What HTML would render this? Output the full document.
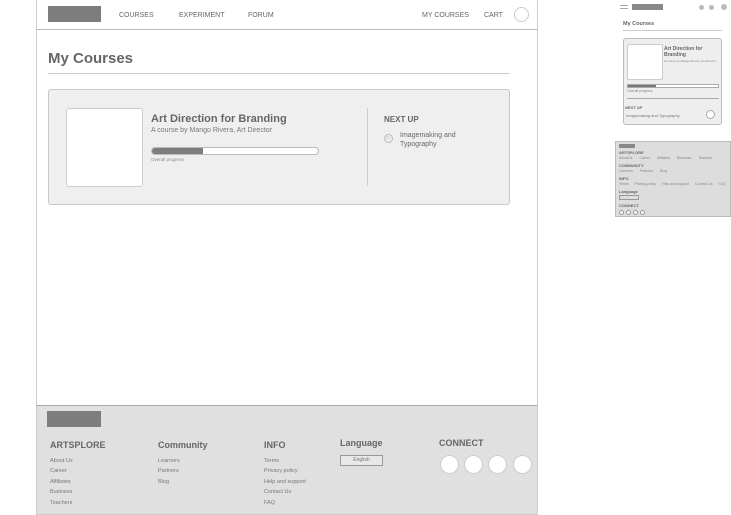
<!DOCTYPE html>
<html><head><style>
*{margin:0;padding:0;box-sizing:border-box}
body{width:731px;height:515px;background:#fff;position:relative;overflow:hidden;font-family:"Liberation Sans",sans-serif;color:#666}
.a{position:absolute;white-space:nowrap}
.nav{font-size:7px;color:#666;top:12px}
.fh{font-size:9px;font-weight:bold;color:#666}
.fl{font-size:5.5px;color:#777}
.c{position:absolute;width:19px;height:19px;border-radius:50%;background:#fff;border:1px solid #ccc;top:455px}
.t{font-size:3.5px;color:#888}
.mh{font-size:4px;font-weight:bold;color:#666}
</style></head><body>
<div class="a" style="left:36px;top:0;width:502px;height:515px;border:1px solid #ccc;border-top:none"></div>
<div class="a" style="left:36px;top:29px;width:502px;height:1px;background:#bbb"></div>
<div class="a" style="left:48px;top:6px;width:53px;height:16px;background:#7d7d7d"></div>
<div class="a nav" style="left:119px">COURSES</div>
<div class="a nav" style="left:179px">EXPERIMENT</div>
<div class="a nav" style="left:248px">FORUM</div>
<div class="a nav" style="left:422px">MY COURSES</div>
<div class="a nav" style="left:484px">CART</div>
<div class="a" style="left:514px;top:7px;width:15px;height:15px;border-radius:50%;border:1px solid #ccc"></div>
<div class="a" style="left:48px;top:50px;font-size:15px;font-weight:bold;color:#666">My Courses</div>
<div class="a" style="left:48px;top:73px;width:462px;height:1px;background:#ccc"></div>
<div class="a" style="left:48px;top:89px;width:462px;height:116px;background:#efefef;border:1px solid #c8c8c8;border-radius:3px"></div>
<div class="a" style="left:66px;top:108px;width:77px;height:79px;background:#fff;border:1px solid #ccc;border-radius:3px"></div>
<div class="a" style="left:151px;top:113px;font-size:11px;font-weight:bold;color:#666">Art Direction for Branding</div>
<div class="a" style="left:151px;top:127px;font-size:7px;color:#777">A course by Mango Rivera, Art Director</div>
<div class="a" style="left:151px;top:147px;width:168px;height:8px;background:#fff;border:1px solid #bbb;border-radius:4px;overflow:hidden"><div style="width:51px;height:100%;background:#7d7d7d"></div></div>
<div class="a" style="left:151px;top:157px;font-size:4.5px;color:#888">Overall progress</div>
<div class="a" style="left:367px;top:108px;width:1px;height:78px;background:#ccc"></div>
<div class="a" style="left:384px;top:115px;font-size:8px;font-weight:bold;color:#666">NEXT UP</div>
<div class="a" style="left:384px;top:134px;width:9px;height:9px;border-radius:50%;border:1px solid #bbb;font-size:5px;line-height:7px;text-align:center;color:#aaa">▷</div>
<div class="a" style="left:400px;top:131px;font-size:7px;line-height:9px;color:#666">Imagemaking and<br>Typography</div>

<div class="a" style="left:36px;top:405px;width:502px;height:110px;background:#e0e0e0;border-top:1px solid #aaa;border-left:1px solid #ccc;border-right:1px solid #ccc;border-bottom:1px solid #ccc"></div>
<div class="a" style="left:47px;top:411px;width:54px;height:16px;background:#7d7d7d"></div>
<div class="a fh" style="left:50px;top:440px">ARTSPLORE</div>
<div class="a fh" style="left:158px;top:440px">Community</div>
<div class="a fh" style="left:264px;top:440px">INFO</div>
<div class="a fh" style="left:340px;top:438px">Language</div>
<div class="a fh" style="left:439px;top:438px">CONNECT</div>
<div class="a fl" style="left:50px;top:456px;line-height:10.4px">About Us<br>Career<br>Affiliates<br>Business<br>Teachers</div>
<div class="a fl" style="left:158px;top:456px;line-height:10.4px">Learners<br>Partners<br>Blog</div>
<div class="a fl" style="left:264px;top:456px;line-height:10.4px">Terms<br>Privacy policy<br>Help and support<br>Contact Us<br>FAQ</div>
<div class="a" style="left:340px;top:455px;width:43px;height:11px;border:1px solid #999;background:#e8e8e8;font-size:5px;line-height:9px;text-align:center;color:#777">English</div>
<div class="c" style="left:440px"></div><div class="c" style="left:464px"></div><div class="c" style="left:488px"></div><div class="c" style="left:513px"></div>

<!-- mobile -->
<div class="a" style="left:620px;top:5px;width:8px;height:1px;background:#aaa;box-shadow:0 3px 0 #aaa"></div>
<div class="a" style="left:632px;top:4px;width:31px;height:6px;background:#888"></div>
<div class="a" style="left:699px;top:5px;width:5px;height:5px;border-radius:50%;background:#bbb"></div>
<div class="a" style="left:709px;top:5px;width:5px;height:5px;border-radius:50%;background:#bbb"></div>
<div class="a" style="left:721px;top:4px;width:6px;height:6px;border-radius:50%;background:#bbb"></div>
<div class="a" style="left:623px;top:21px;font-size:5.5px;font-weight:bold">My Courses</div>
<div class="a" style="left:623px;top:30px;width:99px;height:1px;background:#ccc"></div>
<div class="a" style="left:623px;top:38px;width:99px;height:87px;background:#eee;border:1px solid #bbb;border-radius:3px"></div>
<div class="a" style="left:627px;top:44px;width:36px;height:36px;background:#fff;border:1px solid #ccc;border-radius:2px"></div>
<div class="a" style="left:664px;top:46px;font-size:5px;font-weight:bold;line-height:6px">Art Direction for<br>Branding</div>
<div class="a t" style="left:664px;top:59px;font-size:3px">A course by Mango Rivera, Art Director</div>
<div class="a" style="left:627px;top:84px;width:92px;height:4px;background:#fff;border:1px solid #aaa"><div style="width:28px;height:100%;background:#777"></div></div>
<div class="a t" style="left:627px;top:89px">Overall progress</div>
<div class="a" style="left:627px;top:98px;width:92px;height:1px;background:#aaa"></div>
<div class="a mh" style="left:625px;top:105px">NEXT UP</div>
<div class="a" style="left:626px;top:113px;font-size:4px;color:#777">Imagemaking and Typography</div>
<div class="a" style="left:706px;top:110px;width:9px;height:9px;border-radius:50%;background:#fff;border:1px solid #aaa"></div>
<div class="a" style="left:615px;top:141px;width:116px;height:76px;background:#ddd;border:1px solid #bbb"></div>
<div class="a" style="left:619px;top:144px;width:16px;height:4px;background:#888"></div>
<div class="a mh" style="left:619px;top:150px">ARTSPLORE</div>
<div class="a t" style="left:619px;top:156px;word-spacing:6px">AboutUs Career Affiliates Business Teachers</div>
<div class="a mh" style="left:619px;top:163px">COMMUNITY</div>
<div class="a t" style="left:619px;top:169px;word-spacing:6px">Learners Partners Blog</div>
<div class="a mh" style="left:619px;top:176px">INFO</div>
<div class="a t" style="left:619px;top:182px;word-spacing:5px">Terms Privacy-policy Help-and-support Contact-Us FAQ</div>
<div class="a mh" style="left:619px;top:189px">Language</div>
<div class="a" style="left:619px;top:195px;width:20px;height:5px;border:1px solid #999"></div>
<div class="a mh" style="left:619px;top:203px">CONNECT</div>
<div class="a" style="left:619px;top:210px;width:5px;height:5px;border-radius:50%;background:#fff;border:1px solid #999"></div>
<div class="a" style="left:626px;top:210px;width:5px;height:5px;border-radius:50%;background:#fff;border:1px solid #999"></div>
<div class="a" style="left:633px;top:210px;width:5px;height:5px;border-radius:50%;background:#fff;border:1px solid #999"></div>
<div class="a" style="left:640px;top:210px;width:5px;height:5px;border-radius:50%;background:#fff;border:1px solid #999"></div>
</body></html>
